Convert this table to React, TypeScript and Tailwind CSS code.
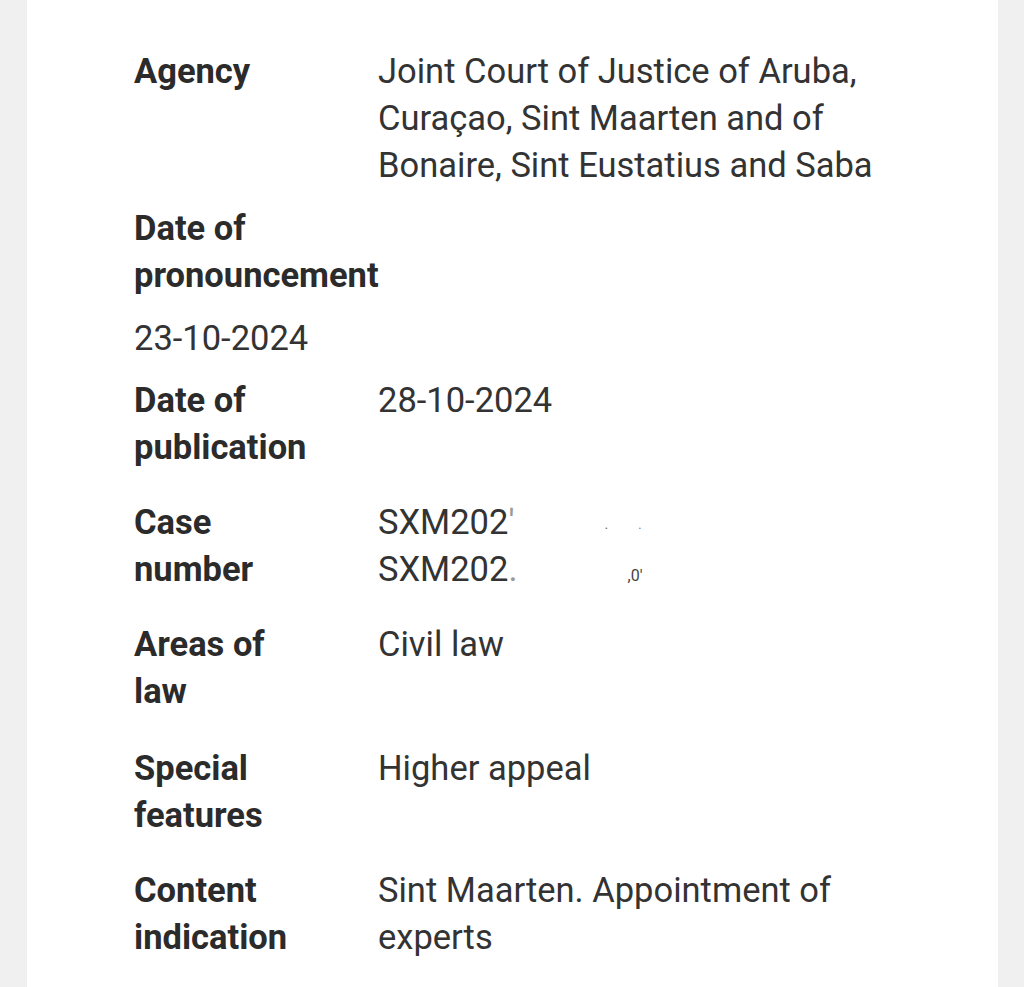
import React from "react"

interface Row {
  label: string
  value?: React.ReactNode
  below?: string
  gap: string
}

const rows: Row[] = [
  {
    label: "Agency",
    value: "Joint Court of Justice of Aruba, Curaçao, Sint Maarten and of Bonaire, Sint Eustatius and Saba",
    gap: "mb-[16px]",
  },
  { label: "Date of pronouncement", below: "23-10-2024", gap: "mb-[15px]" },
  { label: "Date of publication", value: "28-10-2024", gap: "mb-[28px]" },
  {
    label: "Case number",
    value: (
      <>
        <div className="h-[47px]">
          SXM202<span className="text-[#999]">'</span>
          <span className="ml-[90px] text-[14px] leading-none text-[#666]">·</span>
          <span className="ml-[30px] text-[14px] leading-none text-[#888]">·</span>
        </div>
        <div className="h-[47px]">
          SXM202<span className="text-[#999]">.</span>
          <span className="ml-[110px] text-[16px] leading-none text-[#444]">,0'</span>
        </div>
      </>
    ),
    gap: "mb-[28px]",
  },
  { label: "Areas of law", value: "Civil law", gap: "mb-[30px]" },
  { label: "Special features", value: "Higher appeal", gap: "mb-[28px]" },
  { label: "Content indication", value: "Sint Maarten. Appointment of experts", gap: "mb-0" },
]

export default function App() {
  return (
    <div className="min-h-screen bg-[#f0f0f0] px-[27px] font-['Roboto',sans-serif] text-[34.5px] leading-[47px] text-[#333]">
      <div className="bg-white min-h-[987px] px-[107px] pt-[48px] w-[971px]">
        {rows.map((row) =>
          row.below ? (
            <div key={row.label} className={row.gap}>
              <div className="w-[260px] font-bold text-[#2b2b2b] mb-[16px]">{row.label}</div>
              <div>{row.below}</div>
            </div>
          ) : (
            <div key={row.label} className={`flex ${row.gap}`}>
              <div className="w-[244px] shrink-0 pr-[64px] font-bold text-[#2b2b2b]">{row.label}</div>
              <div className="flex-1">{row.value}</div>
            </div>
          )
        )}
      </div>
    </div>
  )
}
